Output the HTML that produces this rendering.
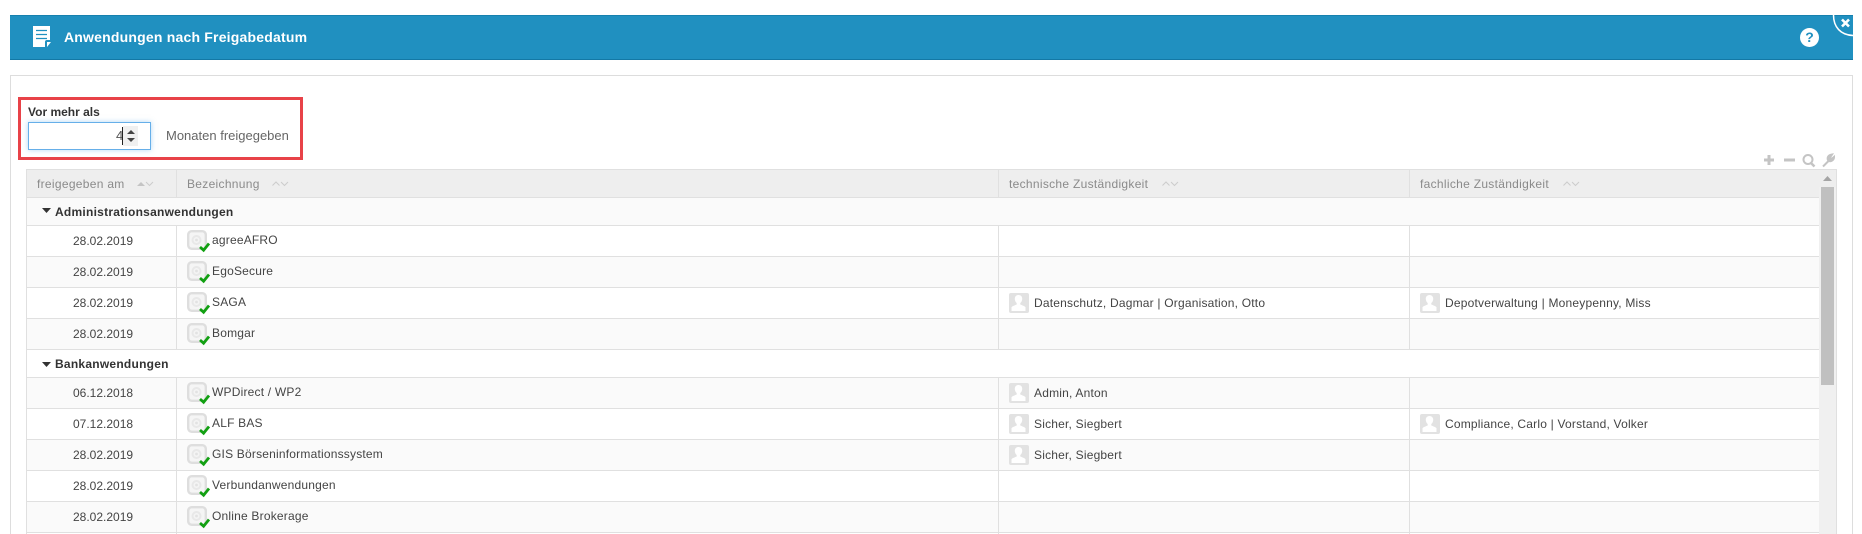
<!DOCTYPE html>
<html lang="de">
<head>
<meta charset="utf-8">
<title>Anwendungen nach Freigabedatum</title>
<style>
html,body{margin:0;padding:0;background:#fff;width:1862px;height:534px;overflow:hidden}
body{position:relative;font-family:"Liberation Sans",sans-serif;font-size:12px;color:#444}
div,span,svg{position:absolute;display:block}
.t{white-space:nowrap;line-height:20px;height:20px}
.r{left:27px;width:1792px;border-bottom:1px solid #e0e0e0;box-sizing:border-box}
.w{background:#fff}.g{background:#fafafa}
.v{width:1px;background:#e0e0e0}
.h{color:#8a8a8a;top:174px;letter-spacing:.3px}
.d{left:73px}
.n{left:212px;color:#444;letter-spacing:.2px}
.b{font-weight:bold;color:#333;left:55px;letter-spacing:.25px}
.p{color:#444;letter-spacing:.2px}
.ic{left:187px;width:24px;height:24px}
.pi{width:20px;height:20px}
.so{width:18px;height:6px;top:181px}
</style>
</head>
<body>
<svg width="0" height="0" style="left:0;top:0">
<defs>
<symbol id="app" viewBox="0 0 24 24">
<rect x="1.2" y="1.2" width="17.600" height="17.600" rx="3.500" fill="#f5f5f5" stroke="#dedede" stroke-width="2.400"/>
<circle cx="9.500" cy="10" r="5" fill="#e8e8e8"/><circle cx="9.500" cy="10" r="3" fill="#f4f4f4"/><circle cx="9.500" cy="10" r="1.400" fill="#e2e2e2"/>
<path d="M13 17l3.600 3.200 5.400-6.700" fill="none" stroke="#12a012" stroke-width="2.800"/>
</symbol>
<symbol id="per" viewBox="0 0 20 20">
<rect width="20" height="20" rx="2" fill="#e2e2e2"/>
<path d="M9.500 2c-2.500 0-3.900 1.800-3.700 4.200.2 1.600.9 3 1.900 3.800v1.500c-1.400.8-4.100 1.300-5.200 2.700V18h14v-3.800c-1.100-1.400-3.800-1.900-5.200-2.700V10c1-.8 1.700-2.200 1.900-3.800C13.400 3.800 12 2 9.500 2z" fill="#fff"/>
</symbol>
<symbol id="sort" viewBox="0 0 18 6">
<path d="M.5 4.500L4 1l3.500 3.500" fill="none" stroke="#ccc" stroke-width="1"/>
<path d="M9 1l3.500 3.500L16 1" fill="none" stroke="#ccc" stroke-width="1"/>
</symbol>
</defs>
</svg>

<!-- Header -->
<div style="left:10px;top:15px;width:1843px;height:45px;background:#2090c0;border-top:1px solid #1680ae;border-bottom:1px solid #1378a5;box-sizing:border-box"></div>
<svg style="left:33px;top:26px" width="18" height="21" viewBox="0 0 18 21">
<path d="M0 0h17v14h-3a2 2 0 0 0-2 2v5H0z" fill="#fff"/>
<path d="M3 4.500h11M3 8.500h11M3 12.500h11" stroke="#2090c0" stroke-width="1.300"/>
<path d="M14 21v-5h4z" fill="#fff"/>
</svg>
<div class="t" style="left:64px;top:27px;color:#fff;font-weight:bold;font-size:14px;letter-spacing:.2px">Anwendungen nach Freigabedatum</div>
<div style="left:1800px;top:28px;width:19px;height:19px;border-radius:50%;background:#fff;color:#2090c0;font-weight:bold;font-size:14px;line-height:19px;text-align:center">?</div>
<svg style="left:1832px;top:15px" width="21" height="22" viewBox="0 0 21 22">
<path d="M1.500 0c0 12 7 20 19.500 20.500" fill="none" stroke="#fff" stroke-width="1.500"/>
<path d="M10 4.500l7 7M17 4.500l-7 7" stroke="#fff" stroke-width="2.600"/>
</svg>

<!-- Panel -->
<div style="left:10px;top:75px;width:1843px;height:470px;border:1px solid #ddd;box-sizing:border-box"></div>

<!-- Filter -->
<div style="left:18px;top:97px;width:285px;height:63px;border:3px solid #e84248;box-sizing:border-box"></div>
<div class="t" style="left:28px;top:102px;font-weight:bold;color:#333;font-size:12px">Vor mehr als</div>
<div style="left:28px;top:122px;width:123px;height:28px;background:#fff;border:1px solid #66afe9;box-sizing:border-box;box-shadow:0 0 5px rgba(102,175,233,.5)"></div>
<div class="t" style="left:116px;top:126px;color:#555;font-size:13px">4</div>
<div style="left:122px;top:127px;width:1px;height:18px;background:#222"></div>
<div style="left:123px;top:126px;width:15px;height:20px;background:#f0f0f0"></div>
<svg style="left:125px;top:128px" width="12" height="16" viewBox="0 0 12 16">
<path d="M2 6l4-4 4 4zM2 10h8l-4 4z" fill="#444"/>
</svg>
<div class="t" style="left:166px;top:126px;color:#666;font-size:13px">Monaten freigegeben</div>

<!-- Toolbar -->
<svg style="left:1762px;top:152px" width="74" height="16" viewBox="0 0 74 16">
<path d="M2 8h10M7 3v10" stroke="#c4c4c4" stroke-width="3"/>
<path d="M22 8h11" stroke="#c4c4c4" stroke-width="3"/>
<circle cx="46" cy="7.500" r="4.500" fill="none" stroke="#c4c4c4" stroke-width="2"/>
<path d="M49 11l3.500 3.500" stroke="#c4c4c4" stroke-width="2.500"/>
<path d="M61 14.500l6.500-6.500M66 8c-1-2 0-5 4-5.500l-2 3 1.500 1.500 2.500-2c0 3-3 5-5 4z" fill="#c4c4c4" stroke="#c4c4c4" stroke-width="2"/>
</svg>

<!-- Table frame -->
<div style="left:26px;top:169px;width:1811px;height:370px;border:1px solid #e0e0e0;box-sizing:border-box"></div>
<div class="r" style="top:170px;height:28px;background:#eee"></div>
<div style="left:1819px;top:170px;width:17px;height:364px;background:#f0f0f0"></div>
<div style="left:1819px;top:170px;width:17px;height:17px;background:#eee"></div>
<svg style="left:1823px;top:175px" width="10" height="6" viewBox="0 0 10 6"><path d="M0 6l4.500-5L9 6z" fill="#a5a5a5"/></svg>
<div style="left:1821px;top:187px;width:13px;height:198px;background:#c0c0c0"></div>

<!-- Rows -->
<div class="r g" style="top:198px;height:28px"></div>
<div class="r w" style="top:226px;height:31px"></div>
<div class="r g" style="top:257px;height:31px"></div>
<div class="r w" style="top:288px;height:31px"></div>
<div class="r g" style="top:319px;height:31px"></div>
<div class="r w" style="top:350px;height:28px"></div>
<div class="r g" style="top:378px;height:31px"></div>
<div class="r w" style="top:409px;height:31px"></div>
<div class="r g" style="top:440px;height:31px"></div>
<div class="r w" style="top:471px;height:31px"></div>
<div class="r g" style="top:502px;height:31px"></div>

<!-- Column dividers -->
<div class="v" style="left:176px;top:170px;height:27px"></div>
<div class="v" style="left:998px;top:170px;height:27px"></div>
<div class="v" style="left:1409px;top:170px;height:27px"></div>
<div class="v" style="left:176px;top:226px;height:123px"></div>
<div class="v" style="left:998px;top:226px;height:123px"></div>
<div class="v" style="left:1409px;top:226px;height:123px"></div>
<div class="v" style="left:176px;top:378px;height:156px"></div>
<div class="v" style="left:998px;top:378px;height:156px"></div>
<div class="v" style="left:1409px;top:378px;height:156px"></div>

<!-- Header text -->
<div class="t h" style="left:37px">freigegeben am</div>
<svg class="so" style="left:137px"><path d="M0 5l4-4 4 4z" fill="#c4c4c4"/><path d="M9 1l3.500 3.500L16 1" fill="none" stroke="#ccc"/></svg>
<div class="t h" style="left:187px">Bezeichnung</div>
<svg class="so" style="left:272px"><use href="#sort"/></svg>
<div class="t h" style="left:1009px">technische Zuständigkeit</div>
<svg class="so" style="left:1162px"><use href="#sort"/></svg>
<div class="t h" style="left:1420px">fachliche Zuständigkeit</div>
<svg class="so" style="left:1563px"><use href="#sort"/></svg>

<!-- Group 1 -->
<svg style="left:42px;top:208px" width="9" height="6" viewBox="0 0 9 6"><path d="M0 0h9L4.500 5z" fill="#333"/></svg>
<div class="t b" style="top:202px">Administrationsanwendungen</div>
<div class="t d" style="top:231px">28.02.2019</div>
<svg class="ic" style="top:230px"><use href="#app"/></svg><div class="t n" style="top:230px">agreeAFRO</div>
<div class="t d" style="top:262px">28.02.2019</div>
<svg class="ic" style="top:261px"><use href="#app"/></svg><div class="t n" style="top:261px">EgoSecure</div>
<div class="t d" style="top:293px">28.02.2019</div>
<svg class="ic" style="top:292px"><use href="#app"/></svg><div class="t n" style="top:292px">SAGA</div>
<svg class="pi" style="left:1009px;top:293px"><use href="#per"/></svg><div class="t p" style="left:1034px;top:293px">Datenschutz, Dagmar | Organisation, Otto</div>
<svg class="pi" style="left:1420px;top:293px"><use href="#per"/></svg><div class="t p" style="left:1445px;top:293px">Depotverwaltung | Moneypenny, Miss</div>
<div class="t d" style="top:324px">28.02.2019</div>
<svg class="ic" style="top:323px"><use href="#app"/></svg><div class="t n" style="top:323px">Bomgar</div>

<!-- Group 2 -->
<svg style="left:42px;top:362px" width="9" height="6" viewBox="0 0 9 6"><path d="M0 0h9L4.500 5z" fill="#333"/></svg>
<div class="t b" style="top:354px">Bankanwendungen</div>
<div class="t d" style="top:383px">06.12.2018</div>
<svg class="ic" style="top:382px"><use href="#app"/></svg><div class="t n" style="top:382px">WPDirect / WP2</div>
<svg class="pi" style="left:1009px;top:383px"><use href="#per"/></svg><div class="t p" style="left:1034px;top:383px">Admin, Anton</div>
<div class="t d" style="top:414px">07.12.2018</div>
<svg class="ic" style="top:413px"><use href="#app"/></svg><div class="t n" style="top:413px">ALF BAS</div>
<svg class="pi" style="left:1009px;top:414px"><use href="#per"/></svg><div class="t p" style="left:1034px;top:414px">Sicher, Siegbert</div>
<svg class="pi" style="left:1420px;top:414px"><use href="#per"/></svg><div class="t p" style="left:1445px;top:414px">Compliance, Carlo | Vorstand, Volker</div>
<div class="t d" style="top:445px">28.02.2019</div>
<svg class="ic" style="top:444px"><use href="#app"/></svg><div class="t n" style="top:444px">GIS Börseninformationssystem</div>
<svg class="pi" style="left:1009px;top:445px"><use href="#per"/></svg><div class="t p" style="left:1034px;top:445px">Sicher, Siegbert</div>
<div class="t d" style="top:476px">28.02.2019</div>
<svg class="ic" style="top:475px"><use href="#app"/></svg><div class="t n" style="top:475px">Verbundanwendungen</div>
<div class="t d" style="top:507px">28.02.2019</div>
<svg class="ic" style="top:506px"><use href="#app"/></svg><div class="t n" style="top:506px">Online Brokerage</div>
</body>
</html>
